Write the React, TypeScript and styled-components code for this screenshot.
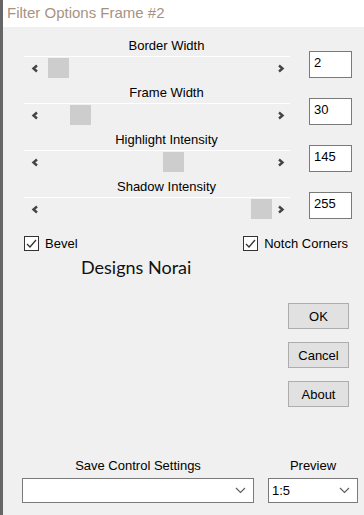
import React from "react";
import styled, { createGlobalStyle } from "styled-components";

const Global = createGlobalStyle`
  html, body { margin: 0; padding: 0; background: #f0f0f0; }
  body { width: 364px; height: 515px; overflow: hidden; }
  * { box-sizing: border-box; }
`;

const Window = styled.div`
  display: flex;
  width: 364px;
  height: 515px;
  font-family: "Liberation Sans", Arial, sans-serif;
  font-size: 13px;
  color: #000;
`;

const LeftEdge = styled.div`
  width: 3px;
  flex: none;
  background: #666666;
`;

const Dialog = styled.div`
  flex: 1;
  display: flex;
  flex-direction: column;
  background: #f0f0f0;
`;

const TitleBar = styled.div`
  height: 27px;
  flex: none;
  background: #ffffff;
  padding-left: 4px;
  display: flex;
  align-items: center;
  font-size: 15px;
  color: #a8927f;
  padding-bottom: 2px;
`;

const Body = styled.div`
  flex: 1;
  display: flex;
  flex-direction: column;
  padding: 10px 0 0 21px;
`;

const Sliders = styled.div`
  display: flex;
  flex-direction: column;
  gap: 6px;
`;

const SliderBlock = styled.div`
  display: flex;
  flex-direction: column;
`;

const SliderLabel = styled.div`
  width: 285px;
  height: 17px;
  line-height: 17px;
  text-align: center;
`;

const SliderRow = styled.div`
  display: flex;
  align-items: flex-start;
  gap: 19px;
  height: 24px;
`;

const Track = styled.div`
  width: 266px;
  margin-top: 2px;
  border-top: 1px solid #ffffff;
  padding-top: 1px;
  height: 22px;
  display: flex;
  align-items: stretch;
`;

const ArrowCell = styled.div<{ $w: number }>`
  width: ${(p) => p.$w}px;
  flex: none;
  display: flex;
  align-items: center;
  justify-content: center;
`;

const Lane = styled.div`
  width: 226px;
  flex: none;
`;

const Thumb = styled.div`
  width: 21px;
  height: 20px;
  background: #cdcdcd;
`;

const EditBox = styled.div`
  width: 43px;
  height: 27px;
  margin-top: -3px;
  border: 1px solid #7a7a7a;
  background: #ffffff;
  padding: 3px 0 0 4px;
  line-height: 16px;
`;

const CheckRow = styled.div`
  margin-top: 17px;
  display: flex;
  justify-content: space-between;
  padding-right: 16px;
  height: 15px;
`;

const CheckItem = styled.label`
  display: flex;
  align-items: center;
  gap: 6px;
  line-height: 15px;
`;

const Box = styled.span`
  width: 15px;
  height: 15px;
  border: 1px solid #333333;
  background: #ffffff;
  display: flex;
  align-items: center;
  justify-content: center;
`;

const Signature = styled.div`
  margin: 6px 0 0 57px;
  font-family: Lato, "Open Sans", sans-serif;
  font-size: 18px;
  line-height: 21px;
  color: #111;
`;

const Buttons = styled.div`
  margin-top: 25px;
  align-self: flex-end;
  margin-right: 15px;
  display: flex;
  flex-direction: column;
  gap: 13px;
`;

const Button = styled.button`
  width: 61px;
  height: 26px;
  background: #e1e1e1;
  border: 1px solid #adadad;
  font-family: "Liberation Sans", Arial, sans-serif;
  font-size: 13px;
  color: #000;
  padding: 0;
`;

const Footer = styled.div`
  margin-top: auto;
  margin-left: -2px;
  padding-bottom: 12px;
  display: flex;
  gap: 14px;
`;

const Field = styled.div`
  display: flex;
  flex-direction: column;
  align-items: center;
  gap: 4px;
`;

const FieldLabel = styled.div`
  height: 16px;
  line-height: 16px;
`;

const Combo = styled.div<{ $w: number }>`
  width: ${(p) => p.$w}px;
  height: 25px;
  border: 1px solid #7a7a7a;
  background: #ffffff;
  display: flex;
  align-items: center;
  justify-content: space-between;
  padding: 0 7px 0 3px;
  line-height: 16px;
`;

const LeftChevron = () => (
  <svg width="8" height="9" viewBox="0 0 8 9">
    <polyline points="6,1.5 2.5,4.5 6,7.5" fill="none" stroke="#444" strokeWidth="2.4" />
  </svg>
);
const RightChevron = () => (
  <svg width="8" height="9" viewBox="0 0 8 9">
    <polyline points="2,1.5 5.5,4.5 2,7.5" fill="none" stroke="#444" strokeWidth="2.4" />
  </svg>
);
const DownChevron = () => (
  <svg width="11" height="7" viewBox="0 0 11 7">
    <polyline points="1,1 5.5,5.5 10,1" fill="none" stroke="#606060" strokeWidth="1.2" />
  </svg>
);
const Check = () => (
  <svg width="11" height="10" viewBox="0 0 11 10">
    <polyline points="1,5 4,8 10,1" fill="none" stroke="#333" strokeWidth="1.3" />
  </svg>
);

const sliders = [
  { label: "Border Width", value: 2 },
  { label: "Frame Width", value: 30 },
  { label: "Highlight Intensity", value: 145 },
  { label: "Shadow Intensity", value: 255 },
];

export default function App() {
  return (
    <>
      <Global />
      <Window>
        <LeftEdge />
        <Dialog>
          <TitleBar>Filter Options Frame #2</TitleBar>
          <Body>
            <Sliders>
              {sliders.map((s) => (
                <SliderBlock key={s.label}>
                  <SliderLabel>{s.label}</SliderLabel>
                  <SliderRow>
                    <Track>
                      <ArrowCell $w={22}>
                        <LeftChevron />
                      </ArrowCell>
                      <Lane>
                        <Thumb style={{ marginLeft: Math.round((s.value * 205) / 255) }} />
                      </Lane>
                      <ArrowCell $w={18}>
                        <RightChevron />
                      </ArrowCell>
                    </Track>
                    <EditBox>{s.value}</EditBox>
                  </SliderRow>
                </SliderBlock>
              ))}
            </Sliders>
            <CheckRow>
              <CheckItem>
                <Box>
                  <Check />
                </Box>
                Bevel
              </CheckItem>
              <CheckItem>
                <Box>
                  <Check />
                </Box>
                Notch Corners
              </CheckItem>
            </CheckRow>
            <Signature>Designs Norai</Signature>
            <Buttons>
              <Button>OK</Button>
              <Button>Cancel</Button>
              <Button>About</Button>
            </Buttons>
            <Footer>
              <Field>
                <FieldLabel>Save Control Settings</FieldLabel>
                <Combo $w={232}>
                  <span />
                  <DownChevron />
                </Combo>
              </Field>
              <Field>
                <FieldLabel>Preview</FieldLabel>
                <Combo $w={90}>
                  <span>1:5</span>
                  <DownChevron />
                </Combo>
              </Field>
            </Footer>
          </Body>
        </Dialog>
      </Window>
    </>
  );
}
